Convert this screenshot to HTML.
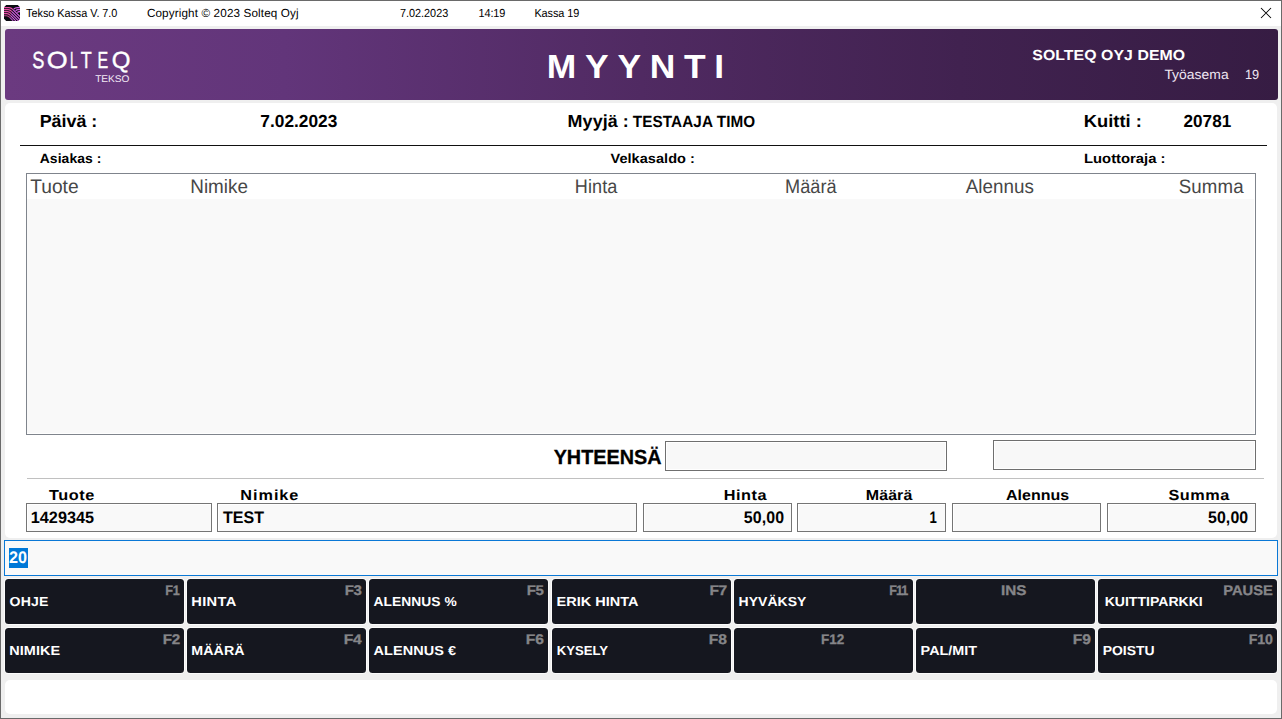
<!DOCTYPE html>
<html lang="fi"><head><meta charset="utf-8"><title>Tekso Kassa V. 7.0</title>
<style>
html,body{margin:0;padding:0;background:#efefef;}
body{width:1282px;height:719px;overflow:hidden;position:relative;font-family:"Liberation Sans",sans-serif;}
#win{position:absolute;left:0;top:0;width:1282px;height:719px;overflow:hidden;background:#efefef;}
#win>*,#win .abs{position:absolute;}
.tx{position:absolute;white-space:pre;line-height:1;font-weight:700;transform-origin:0 50%;color:#000;text-rendering:geometricPrecision;}
#frame{left:0;top:0;width:1280px;height:717px;border:1px solid #6a6a6a;z-index:9;pointer-events:none;}
#titlebar{left:1px;top:1px;width:1280px;height:25px;background:#fff;}
#banner{left:5px;top:29px;width:1273px;height:71px;border-radius:3px;background:linear-gradient(90deg,#6b3a80 0%,#62357a 22%,#502a62 50%,#412250 75%,#361c43 100%);}
#panel{left:5px;top:103px;width:1272px;height:435px;border-radius:5px;background:#fff;}
#logo{left:0;top:0;width:0;height:0;}
#rule{left:20px;top:145px;width:1247px;height:1px;background:#111;}
#list{left:26px;top:173px;width:1228px;height:260px;border:1px solid #7f848c;background:#fff;}
#list .body{left:0;top:25px;width:1227px;height:234px;background:#f9f9f9;}
.box{box-sizing:border-box;border:1px solid #6f6f6f;background:#f8f8f8;box-shadow:inset 0 0 0 1px #fff;}
.fld{box-sizing:border-box;border:1px solid #757575;background:#f9f9f9;top:503px;height:29px;box-shadow:inset 1px 1px 0 0 #fff;}
#sep{left:27px;top:478px;width:1237px;height:1px;background:#c0c0c0;}
#entry{box-sizing:border-box;left:4px;top:540px;width:1274px;height:36px;border:1px solid #0a78d6;background:#f9f9f9;box-shadow:0 1px 0 #f6f0ea;}
#sel{left:4px;top:7px;width:18.5px;height:20px;background:#0078d7;}
.btn{height:45px;width:179px;border-radius:3.5px;background:#15171f;box-shadow:0 0 0 1px rgba(255,255,255,.75);}
#status{left:5px;top:680px;width:1272px;height:34px;border-radius:5px;background:#fff;}
</style></head>
<body>
<div id="win">
<div id="titlebar"></div>
<svg style="left:4px;top:5px" width="16" height="16" viewBox="0 0 16 16"><path d="M2.2 0H13.8L16 2.2V13.8L13.8 16H2.2L0 13.8V2.2Z" fill="#0b0c11"/><g fill="none" stroke-width="1.15"><g stroke="#e84fa8"><path d="M0 2.6H5C7 2.6 8 3.6 9 4.6"/><path d="M0 4.6H4.2C6 4.6 7 5.6 8 6.6"/><path d="M0 6.6H3.6C5.2 6.6 6.2 7.6 7.2 8.6"/><path d="M0 8.6H3C4.6 8.6 5.6 9.6 6.6 10.6"/><path d="M0 10.7H2.4C4 10.7 5 11.4 6 12.6" stroke-opacity=".8"/></g><g stroke="#d65fe6"><path d="M9 4.6L16 11.6"/><path d="M8 6.6L16 14.6"/><path d="M7.2 8.6L14.4 15.8"/><path d="M6.6 10.6L11.8 15.8"/><path d="M6 12.6L9.2 15.8" stroke-opacity=".85"/><path d="M16 2.6H13.4C11.6 2.6 10.6 3.2 9.8 4"/><path d="M16 4.6H14C12.8 4.6 12.2 5.2 11.6 5.8"/><path d="M16 6.6H15C14.2 6.6 13.8 7 13.4 7.6"/></g></g></svg>
<span class="tx" style="left:26px;top:8px;font-size:11.7px;font-weight:400;letter-spacing:-0.051px;transform:translateX(0.11px) scaleX(0.93);">Tekso Kassa V. 7.0</span>
<span class="tx" style="left:146px;top:8px;font-size:11.7px;font-weight:400;letter-spacing:0.132px;transform:translateX(0.91px);">Copyright © 2023 Solteq Oyj</span>
<span class="tx" style="left:399px;top:8px;font-size:11.7px;font-weight:400;letter-spacing:-0.01px;transform:translateX(0.94px) scaleX(0.93);">7.02.2023</span>
<span class="tx" style="left:478px;top:8px;font-size:11.7px;font-weight:400;letter-spacing:-0.064px;transform:translateX(0.39px) scaleX(0.9312);">14:19</span>
<span class="tx" style="left:534px;top:8px;font-size:11.7px;font-weight:400;letter-spacing:-0.063px;transform:translateX(0.4px) scaleX(0.93);">Kassa 19</span>
<svg style="left:1259px;top:7px" width="14" height="13" viewBox="0 0 14 13"><path d="M2 1L12 11M12 1L2 11" stroke="#000" stroke-width="1.05" fill="none"/></svg>
<div id="banner"></div>
<div id="logo" aria-label="SOLTEQ"><span class="tx" style="left:32px;top:49px;font-size:23.26px;font-weight:400;color:#fff;-webkit-text-stroke:0.4px #fff;transform:translateX(0.16px) scaleX(0.782);">S</span><span class="tx" style="left:46px;top:49px;font-size:23.26px;font-weight:400;color:#fff;-webkit-text-stroke:0.4px #fff;transform:translateX(0.64px) scaleX(1.1556);">O</span><span class="tx" style="left:70px;top:49px;font-size:23.26px;font-weight:400;color:#fff;-webkit-text-stroke:0.4px #fff;transform:translateX(0.12px) scaleX(0.5735);">L</span><span class="tx" style="left:80px;top:49px;font-size:23.26px;font-weight:400;color:#fff;-webkit-text-stroke:0.4px #fff;transform:translateX(0.65px) scaleX(0.7709);">T</span><span class="tx" style="left:97px;top:49px;font-size:23.26px;font-weight:400;color:#fff;-webkit-text-stroke:0.4px #fff;transform:translateX(0.53px) scaleX(0.6889);">E</span><span class="tx" style="left:111px;top:49px;font-size:23.26px;font-weight:400;color:#fff;-webkit-text-stroke:0.4px #fff;transform:translateX(0.63px) scaleX(1.0318);">Q</span></div>
<span class="tx" style="left:95px;top:75px;font-size:9.74px;font-weight:400;color:#f3eaf6;transform:translateX(0.16px) scaleX(1.0405);">TEKSO</span>
<span class="tx" style="left:546px;top:51px;font-size:33.43px;color:#fff;letter-spacing:8.216px;transform:translateX(0.82px) scaleX(1.06);">MYYNTI</span>
<span class="tx" style="left:1032px;top:49px;font-size:14.53px;color:#fff;letter-spacing:0.074px;transform:translateX(0.28px) scaleX(1.0896);">SOLTEQ OYJ DEMO</span>
<span class="tx" style="left:1164px;top:68px;font-size:13.37px;font-weight:400;color:#efe6f2;letter-spacing:0.037px;transform:translateX(0.38px) scaleX(1.0381);">Työasema</span>
<span class="tx" style="left:1244px;top:68px;font-size:13.37px;font-weight:400;color:#efe6f2;letter-spacing:0.102px;transform:translateX(0.92px) scaleX(0.956);">19</span>
<div id="panel"></div>
<div id="rule"></div>
<span class="tx" style="left:39px;top:113px;font-size:17.44px;letter-spacing:-0.025px;transform:translateX(0.63px) scaleX(1.0281);">Päivä :</span>
<span class="tx" style="left:260px;top:113px;font-size:17.44px;letter-spacing:0.006px;transform:translateX(0.36px) scaleX(0.9921);">7.02.2023</span>
<span class="tx" style="left:567px;top:113px;font-size:17.44px;letter-spacing:0.067px;transform:translateX(0.59px) scaleX(1.0285);">Myyjä :</span>
<span class="tx" style="left:632px;top:114px;font-size:16.28px;letter-spacing:0.078px;transform:translateX(0.87px) scaleX(0.9399);">TESTAAJA TIMO</span>
<span class="tx" style="left:1083px;top:113px;font-size:17.44px;transform:translateX(0.81px) scaleX(1.0518);">Kuitti :</span>
<span class="tx" style="left:1183px;top:113px;font-size:17.44px;transform:translateX(0.6px) scaleX(0.9807);">20781</span>
<span class="tx" style="left:39px;top:152px;font-size:13.37px;letter-spacing:0.076px;transform:translateX(0.71px) scaleX(1.0401);">Asiakas :</span>
<span class="tx" style="left:610px;top:152px;font-size:13.37px;letter-spacing:0.04px;transform:translateX(0.49px) scaleX(1.0869);">Velkasaldo :</span>
<span class="tx" style="left:1084px;top:152px;font-size:13.37px;transform:scaleX(1.1092);">Luottoraja :</span>
<div id="list"><div class="abs body"></div></div>
<span class="tx" style="left:30px;top:178px;font-size:19.48px;font-weight:400;color:#474747;transform:translateX(0.27px) scaleX(0.9855);">Tuote</span>
<span class="tx" style="left:190px;top:178px;font-size:19.48px;font-weight:400;color:#474747;transform:translateX(0.28px) scaleX(0.9683);">Nimike</span>
<span class="tx" style="left:574px;top:178px;font-size:19.48px;font-weight:400;color:#474747;letter-spacing:0.059px;transform:translateX(0.87px) scaleX(0.9279);">Hinta</span>
<span class="tx" style="left:785px;top:178px;font-size:19.48px;font-weight:400;color:#474747;letter-spacing:0.049px;transform:translateX(0.05px) scaleX(0.9309);">Määrä</span>
<span class="tx" style="left:965px;top:178px;font-size:19.48px;font-weight:400;color:#474747;letter-spacing:0.028px;transform:translateX(0.72px) scaleX(0.9658);">Alennus</span>
<span class="tx" style="left:1178px;top:178px;font-size:19.48px;font-weight:400;color:#474747;letter-spacing:0.12px;transform:translateX(0.74px) scaleX(0.959);">Summa</span>
<span class="tx" style="left:553px;top:448px;font-size:20.35px;letter-spacing:0.017px;-webkit-text-stroke:0.3px #000;transform:translateX(0.65px) scaleX(0.9727);">YHTEENSÄ</span>
<div class="box" style="left:665px;top:441px;width:282px;height:30px"></div>
<div class="box" style="left:993px;top:440px;width:263px;height:30px"></div>
<div id="sep"></div>
<span class="tx" style="left:48px;top:489px;font-size:14.53px;letter-spacing:0.535px;transform:translateX(0.96px) scaleX(1.12);">Tuote</span>
<span class="tx" style="left:240px;top:489px;font-size:14.53px;letter-spacing:0.842px;transform:translateX(0.37px) scaleX(1.12);">Nimike</span>
<span class="tx" style="left:723px;top:489px;font-size:14.53px;letter-spacing:0.453px;transform:translateX(0.81px) scaleX(1.12);">Hinta</span>
<span class="tx" style="left:865px;top:489px;font-size:14.53px;letter-spacing:0.058px;transform:translateX(0.8px) scaleX(1.1023);">Määrä</span>
<span class="tx" style="left:1006px;top:489px;font-size:14.53px;letter-spacing:0.022px;transform:scaleX(1.1008);">Alennus</span>
<span class="tx" style="left:1168px;top:489px;font-size:14.53px;letter-spacing:0.493px;transform:translateX(0.41px) scaleX(1.12);">Summa</span>
<div class="fld" style="left:26px;width:186px"><span class="tx" style="left:3px;top:6px;font-size:16.42px;letter-spacing:-0.007px;transform:translateX(0.84px) scaleX(0.989);">1429345</span></div>
<div class="fld" style="left:217px;width:420px"><span class="tx" style="left:4px;top:6px;font-size:16.72px;letter-spacing:-0.007px;transform:translateX(0.96px) scaleX(0.96);">TEST</span></div>
<div class="fld" style="left:643px;width:149px"><span class="tx" style="left:99px;top:6px;font-size:16.72px;letter-spacing:0.14px;transform:translateX(0.66px) scaleX(0.9535);">50,00</span></div>
<div class="fld" style="left:797px;width:149px"><span class="tx" style="left:131px;top:6px;font-size:16.72px;transform:translateX(0.44px) scaleX(0.7889);">1</span></div>
<div class="fld" style="left:952px;width:149px"></div>
<div class="fld" style="left:1107px;width:149px"><span class="tx" style="left:99px;top:6px;font-size:16.72px;letter-spacing:0.117px;transform:translateX(0.96px) scaleX(0.9511);">50,00</span></div>
<div id="entry"><div id="sel" class="abs"></div><span class="tx" style="left:4px;top:9px;font-size:16.72px;color:#fff;transform:translateX(0.1px) scaleX(0.9656);">20</span></div>
<div class="btn" style="left:5px;top:579px"><span class="tx" style="left:4px;top:16px;font-size:13.08px;color:#fff;letter-spacing:0.099px;transform:translateX(0.59px) scaleX(1.0784);">OHJE</span><span class="tx" style="left:160px;top:5px;font-size:13.95px;color:#858588;letter-spacing:-0.338px;-webkit-text-stroke:0.3px #858588;transform:translateX(0.21px) scaleX(0.9097);">F1</span></div><div class="btn" style="left:187px;top:579px"><span class="tx" style="left:4px;top:16px;font-size:13.08px;color:#fff;letter-spacing:0.349px;transform:translateX(0.17px) scaleX(1.12);">HINTA</span><span class="tx" style="left:157px;top:5px;font-size:13.95px;color:#858588;letter-spacing:-0.35px;-webkit-text-stroke:0.3px #858588;transform:translateX(0.75px) scaleX(1.0757);">F3</span></div><div class="btn" style="left:369px;top:579px"><span class="tx" style="left:4px;top:16px;font-size:13.08px;color:#fff;letter-spacing:0.048px;transform:translateX(0.61px) scaleX(1.0538);">ALENNUS %</span><span class="tx" style="left:157px;top:5px;font-size:13.95px;color:#858588;letter-spacing:-0.427px;-webkit-text-stroke:0.3px #858588;transform:translateX(0.75px) scaleX(1.0757);">F5</span></div><div class="btn" style="left:552px;top:579px"><span class="tx" style="left:4px;top:16px;font-size:13.08px;color:#fff;transform:translateX(0.59px) scaleX(1.1084);">ERIK HINTA</span><span class="tx" style="left:157px;top:5px;font-size:13.95px;color:#858588;letter-spacing:-0.445px;-webkit-text-stroke:0.3px #858588;transform:translateX(0.41px) scaleX(1.1184);">F7</span></div><div class="btn" style="left:734px;top:579px"><span class="tx" style="left:4px;top:16px;font-size:13.08px;color:#fff;letter-spacing:0.059px;transform:translateX(0.5px) scaleX(1.0678);">HYVÄKSY</span><span class="tx" style="left:155px;top:5px;font-size:13.95px;color:#858588;letter-spacing:-1.019px;-webkit-text-stroke:0.3px #858588;transform:translateX(0.24px) scaleX(0.9);">F11</span></div><div class="btn" style="left:916px;top:579px"><span class="tx" style="left:85px;top:5px;font-size:13.95px;color:#858588;letter-spacing:-0.043px;-webkit-text-stroke:0.3px #858588;transform:translateX(0.08px) scaleX(1.0947);">INS</span></div><div class="btn" style="left:1098px;top:579px"><span class="tx" style="left:6px;top:16px;font-size:13.08px;color:#fff;transform:translateX(0.66px) scaleX(1.0744);">KUITTIPARKKI</span><span class="tx" style="left:125px;top:5px;font-size:13.95px;color:#858588;letter-spacing:-0.052px;-webkit-text-stroke:0.3px #858588;transform:translateX(0.3px) scaleX(1.0571);">PAUSE</span></div>
<div class="btn" style="left:5px;top:628px"><span class="tx" style="left:4px;top:16px;font-size:13.08px;color:#fff;letter-spacing:0.068px;transform:translateX(0.22px) scaleX(1.1049);">NIMIKE</span><span class="tx" style="left:157px;top:5px;font-size:13.95px;color:#858588;letter-spacing:-0.209px;-webkit-text-stroke:0.3px #858588;transform:translateX(0.68px) scaleX(1.089);">F2</span></div><div class="btn" style="left:187px;top:628px"><span class="tx" style="left:4px;top:16px;font-size:13.08px;color:#fff;letter-spacing:0.077px;transform:translateX(0.23px) scaleX(1.0879);">MÄÄRÄ</span><span class="tx" style="left:156px;top:5px;font-size:13.95px;color:#858588;letter-spacing:-0.336px;-webkit-text-stroke:0.3px #858588;transform:translateX(0.85px) scaleX(1.12);">F4</span></div><div class="btn" style="left:369px;top:628px"><span class="tx" style="left:4px;top:16px;font-size:13.08px;color:#fff;letter-spacing:0.07px;transform:translateX(0.57px) scaleX(1.1056);">ALENNUS €</span><span class="tx" style="left:156px;top:5px;font-size:13.95px;color:#858588;letter-spacing:-0.19px;-webkit-text-stroke:0.3px #858588;transform:translateX(0.85px) scaleX(1.12);">F6</span></div><div class="btn" style="left:552px;top:628px"><span class="tx" style="left:4px;top:16px;font-size:13.08px;color:#fff;letter-spacing:0.007px;transform:translateX(0.68px) scaleX(1.0025);">KYSELY</span><span class="tx" style="left:156px;top:5px;font-size:13.95px;color:#858588;letter-spacing:-0.113px;-webkit-text-stroke:0.3px #858588;transform:translateX(0.85px) scaleX(1.12);">F8</span></div><div class="btn" style="left:734px;top:628px"><span class="tx" style="left:87px;top:5px;font-size:13.95px;color:#858588;letter-spacing:-0.02px;-webkit-text-stroke:0.3px #858588;transform:translateX(0.07px) scaleX(0.9685);">F12</span></div><div class="btn" style="left:916px;top:628px"><span class="tx" style="left:4px;top:16px;font-size:13.08px;color:#fff;transform:translateX(0.6px) scaleX(1.1009);">PAL/MIT</span><span class="tx" style="left:156px;top:5px;font-size:13.95px;color:#858588;letter-spacing:-0.047px;-webkit-text-stroke:0.3px #858588;transform:translateX(0.85px) scaleX(1.12);">F9</span></div><div class="btn" style="left:1098px;top:628px"><span class="tx" style="left:4px;top:16px;font-size:13.08px;color:#fff;letter-spacing:0.008px;transform:translateX(0.68px) scaleX(1.0674);">POISTU</span><span class="tx" style="left:150px;top:5px;font-size:13.95px;color:#858588;letter-spacing:-0.131px;-webkit-text-stroke:0.3px #858588;transform:translateX(0.87px) scaleX(1.0132);">F10</span></div>
<div id="status"></div>
<div id="frame"></div>
</div>
</body></html>
